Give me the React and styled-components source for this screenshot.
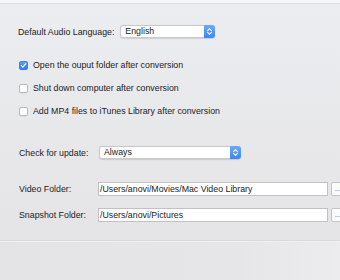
import React from "react";
import styled, { createGlobalStyle } from "styled-components";

const Global = createGlobalStyle`
  html, body { margin: 0; padding: 0; }
  body { font-family: "Liberation Sans", Arial, sans-serif; }
`;

const Window = styled.div`
  width: 340px;
  height: 280px;
  overflow: hidden;
  display: flex;
  flex-direction: column;
  background: linear-gradient(180deg, #ecedf0 0%, #e7e7ea 60%, #e3e3e5 100%);
  color: #222;
  font-size: 8.8px;
`;

const TopEdge = styled.div`
  height: 3px;
  background: #f6f6f6;
  border-bottom: 1px solid #dedede;
  flex: none;
`;

const Body = styled.div`
  display: flex;
  flex-direction: column;
  padding: 21px 0 0 18px;
  height: 236px;
  box-sizing: border-box;
  flex: none;
`;

const Row = styled.div`
  display: flex;
  align-items: center;
  height: ${(p) => p.h || 14}px;
  margin-top: ${(p) => p.mt || 0}px;
  padding-left: ${(p) => p.pl || 0}px;
`;

const Label = styled.span`
  width: ${(p) => (p.w ? p.w + "px" : "auto")};
  margin-right: ${(p) => p.mr || 0}px;
  white-space: nowrap;
  flex: none;
`;

const Select = styled.div`
  width: ${(p) => p.w}px;
  height: 13px;
  box-sizing: border-box;
  display: flex;
  align-items: stretch;
  background: #fff;
  border: 1px solid #c9c9cc;
  border-radius: 3px;
  box-shadow: 0 0.5px 1px rgba(0, 0, 0, 0.12);
  flex: none;
`;

const SelectText = styled.span`
  flex: 1;
  padding-left: 4px;
  line-height: 11px;
  color: #222;
`;

const Stepper = styled.span`
  width: 11px;
  margin: -1px -1px -1px 0;
  border-radius: 0 3px 3px 0;
  background: linear-gradient(180deg, #6aaaf9 0%, #3a86f3 100%);
  display: flex;
  align-items: center;
  justify-content: center;
`;

const Check = styled.span`
  width: 9px;
  height: 9px;
  box-sizing: border-box;
  border-radius: 2px;
  margin-right: 5px;
  flex: none;
  display: flex;
  align-items: center;
  justify-content: center;
  background: ${(p) => (p.on ? "linear-gradient(180deg,#5aa0f8,#2f7ff2)" : "#fff")};
  border: 1px solid ${(p) => (p.on ? "#3680ee" : "#b8b8bb")};
  box-shadow: 0 0.5px 0.5px rgba(0, 0, 0, 0.08);
`;

const Input = styled.div`
  width: 230px;
  height: 14px;
  box-sizing: border-box;
  background: #fff;
  border: 1px solid #c2c2c4;
  padding-left: 1px;
  line-height: 12px;
  color: #222;
  flex: none;
  white-space: nowrap;
`;

const Browse = styled.div`
  width: 22px;
  height: 14px;
  margin-left: 3px;
  box-sizing: border-box;
  background: #fbfbfb;
  border: 1px solid #c4c4c6;
  border-radius: 2px;
  flex: none;
  font-size: 7px;
  line-height: 11px;
  padding-left: 3px;
  color: #444;
`;

const Separator = styled.div`
  height: 1px;
  background: #d9d9db;
  border-bottom: 1px solid #f1f1f2;
  flex: none;
`;

const Footer = styled.div`
  flex: 1;
  background: linear-gradient(90deg, #e4e4e6 0%, #e6e6e8 70%, #ececee 100%);
`;

const Chevrons = () => (
  <svg width="7" height="9" viewBox="0 0 7 9">
    <path d="M1.6 3.6 L3.5 1.7 L5.4 3.6 M1.6 5.4 L3.5 7.3 L5.4 5.4" fill="none" stroke="#fff" strokeWidth="1.1" strokeLinecap="round" strokeLinejoin="round" />
  </svg>
);

const Tick = () => (
  <svg width="7" height="7" viewBox="0 0 7 7">
    <path d="M1.3 3.7 L2.8 5.2 L5.8 1.6" fill="none" stroke="#fff" strokeWidth="1.2" strokeLinecap="round" strokeLinejoin="round" />
  </svg>
);

const CheckRow = ({ on, children, mt }) => (
  <Row mt={mt} pl={1}>
    <Check on={on}>{on && <Tick />}</Check>
    <span>{children}</span>
  </Row>
);

export default function App() {
  return (
    <>
      <Global />
      <Window>
        <TopEdge />
        <Body>
          <Row h={13}>
            <Label mr={6}>Default Audio Language:</Label>
            <Select w={95}>
              <SelectText>English</SelectText>
              <Stepper><Chevrons /></Stepper>
            </Select>
          </Row>
          <CheckRow on mt={20}>Open the ouput folder after conversion</CheckRow>
          <CheckRow mt={9}>Shut down computer after conversion</CheckRow>
          <CheckRow mt={9}>Add MP4 files to iTunes Library after conversion</CheckRow>
          <Row h={13} mt={28} pl={1}>
            <Label w={80}>Check for update:</Label>
            <Select w={142}>
              <SelectText>Always</SelectText>
              <Stepper><Chevrons /></Stepper>
            </Select>
          </Row>
          <Row mt={23} pl={1}>
            <Label w={79}>Video Folder:</Label>
            <Input>/Users/anovi/Movies/Mac Video Library</Input>
            <Browse>...</Browse>
          </Row>
          <Row mt={12} pl={1}>
            <Label w={79}>Snapshot Folder:</Label>
            <Input>/Users/anovi/Pictures</Input>
            <Browse>...</Browse>
          </Row>
        </Body>
        <Separator />
        <Footer />
      </Window>
    </>
  );
}
